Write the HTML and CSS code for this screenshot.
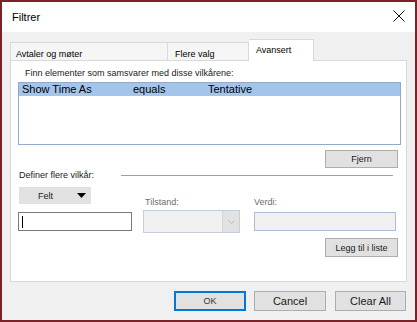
FILE: index.html
```html
<!DOCTYPE html>
<html lang="no">
<head>
    <meta charset="UTF-8">
    <meta name="viewport" content="width=device-width, initial-scale=1.0">
    <title>Filtrer</title>
    <link rel="stylesheet" href="styles.css">
</head>
<body>
    <div class="window">
        <div class="titlebar">
            <span class="title">Filtrer</span>
            <svg class="close" width="12" height="12" viewBox="0 0 12 12">
                <path d="M0.5 0.5 L11.5 11.5 M11.5 0.5 L0.5 11.5" stroke="#111" stroke-width="1" fill="none"/>
            </svg>
        </div>

        <div class="client">
            <div class="tabs">
                <div class="tab tab-first">Avtaler og møter</div>
                <div class="tab tab-second">Flere valg</div>
                <div class="tab tab-active">Avansert</div>
            </div>

            <div class="panel">
                <p class="caption">Finn elementer som samsvarer med disse vilkårene:</p>
                <div class="criteria-list">
                    <div class="criteria-row selected">
                        <span class="col-field">Show Time As</span>
                        <span class="col-cond">equals</span>
                        <span class="col-value">Tentative</span>
                    </div>
                </div>
                <div class="row-right">
                    <button class="btn btn-remove">Fjern</button>
                </div>

                <div class="divider">
                    <span>Definer flere vilkår:</span>
                    <span class="divider-line"></span>
                </div>

                <div class="define-grid">
                    <button class="btn btn-field">
                        <span>Felt</span>
                        <svg width="9" height="5" viewBox="0 0 9 5"><path d="M0 0 H9 L4.5 5 Z" fill="#000"/></svg>
                    </button>
                    <span class="dim-label label-cond">Tilstand:</span>
                    <span class="dim-label">Verdi:</span>
                    <div class="textbox"><span class="caret"></span></div>
                    <div class="combo">
                        <span class="combo-arrow">
                            <svg width="7" height="4" viewBox="0 0 7 4"><path d="M0.5 0.5 L3.5 3.5 L6.5 0.5" stroke="#b8b8b8" fill="none"/></svg>
                        </span>
                    </div>
                    <div class="textbox textbox-disabled"></div>
                </div>

                <div class="row-right">
                    <button class="btn btn-add">Legg til i liste</button>
                </div>
            </div>

            <div class="footer">
                <button class="btn btn-default">OK</button>
                <button class="btn btn-big">Cancel</button>
                <button class="btn btn-big btn-clear">Clear All</button>
            </div>
        </div>
    </div>
</body>
</html>
```

FILE: styles.css
```css
body {
    margin: 0;
    font-family: "Liberation Sans", Arial, sans-serif;
    color: #000;
    background-color: #fff;
}

.window {
    width: 417px;
    height: 322px;
    box-sizing: border-box;
    border: 2px solid #7a2226;
    display: flex;
    flex-direction: column;
    overflow: hidden;
}

.titlebar {
    height: 30px;
    flex: none;
    background-color: #fff;
    display: flex;
    align-items: center;
    justify-content: space-between;
    padding: 0 10px 0 10px;
}

.title {
    font-size: 11px;
}

.close {
    display: block;
    margin-top: -2px;
}

.client {
    flex: 1;
    background-color: #f0f0f0;
    padding: 7px 8px 0 8px;
}

/* tabs */
.tabs {
    display: flex;
    align-items: flex-end;
    height: 21px;
}

.tab {
    box-sizing: border-box;
    font-size: 9px;
    background-color: #f5f5f5;
    border: 1px solid #d9d9d9;
    border-bottom: none;
    height: 18px;
    padding: 6px 0 0 7px;
}

.tab-first {
    width: 158px;
    padding-left: 5px;
}

.tab-second {
    width: 81px;
    border-left: none;
}

.tab-active {
    width: 65px;
    height: 22px;
    margin-bottom: -1px;
    background-color: #fff;
    border-left: none;
    padding-top: 5px;
    position: relative;
    z-index: 1;
}

/* panel */
.panel {
    box-sizing: border-box;
    height: 222px;
    background-color: #fff;
    border: 1px solid #d9d9d9;
    display: flex;
    flex-direction: column;
}

.caption {
    font-size: 9px;
    line-height: 12px;
    margin: 6px 0 0 14px;
    color: #1a1a1a;
}

.criteria-list {
    box-sizing: border-box;
    margin: 3px 0 0 7px;
    width: 383px;
    height: 63px;
    border: 1px solid #93abc9;
}

.criteria-row {
    display: flex;
    font-size: 11px;
    line-height: 13px;
    padding-left: 3px;
}

.criteria-row.selected {
    background-color: #a3c5ea;
}

.col-field {
    width: 111px;
}

.col-cond {
    width: 75px;
}

.row-right {
    display: flex;
    justify-content: flex-end;
    padding-right: 8px;
}

/* buttons */
.btn {
    box-sizing: border-box;
    font-family: "Liberation Sans", Arial, sans-serif;
    font-size: 9px;
    color: #1a1a1a;
    background-color: #e1e1e1;
    border: 1px solid #adadad;
    padding: 0;
    margin: 0;
    width: 73px;
}

.btn-remove {
    height: 18px;
    margin-top: 5px;
}

.btn-add {
    height: 19px;
    margin-top: 5px;
}

/* define section */
.divider {
    display: flex;
    align-items: center;
    font-size: 9px;
    line-height: 12px;
    margin: 1px 13px 0 8px;
    color: #1a1a1a;
}

.divider-line {
    flex: 1;
    height: 1px;
    background-color: #a0a0a0;
    margin-left: 27px;
}

.define-grid {
    display: grid;
    grid-template-columns: 114px 97px 145px;
    grid-template-rows: 21px 23px;
    column-gap: 11px;
    row-gap: 2px;
    margin: 6px 0 0 7px;
}

.define-grid > :nth-child(3n) {
    margin-left: 3px;
}

.btn-field {
    width: 72px;
    height: 17px;
    margin-left: 1px;
    border-color: #e1e1e1;
    display: flex;
    align-items: center;
    justify-content: space-between;
    padding: 0 4px 0 18px;
    align-self: start;
}

.dim-label {
    font-size: 9px;
    line-height: 12px;
    color: #6d6d6d;
    align-self: end;
}

.label-cond {
    padding-left: 2px;
}

.textbox {
    box-sizing: border-box;
    height: 19px;
    border: 1px solid #7a7a7a;
    background-color: #fff;
    align-self: center;
    display: flex;
    align-items: center;
    padding-left: 3px;
}

.caret {
    width: 1px;
    height: 12px;
    background-color: #000;
}

.textbox-disabled {
    border-color: #a9bfd9;
    background-color: #f0f0f0;
}

.combo {
    box-sizing: border-box;
    height: 23px;
    border: 1px solid #c3cfdf;
    background-color: #f0f0f0;
    display: flex;
    justify-content: flex-end;
    align-self: center;
}

.combo-arrow {
    width: 16px;
    background-color: #e2e2e2;
    border-left: 1px solid #d4d4d4;
    display: flex;
    align-items: center;
    justify-content: center;
}

/* footer */
.footer {
    display: flex;
    justify-content: flex-end;
    gap: 8px;
    margin-top: 9px;
    padding-right: 1px;
}

.footer .btn {
    width: 72px;
    height: 20px;
}

.btn-big {
    font-size: 11px;
}

.footer .btn-clear {
    width: 71px;
    margin-left: 1px;
}

.btn-default {
    border-color: #0078d7;
    box-shadow: inset 0 0 0 1px #0078d7;
    color: #333;
}
```
